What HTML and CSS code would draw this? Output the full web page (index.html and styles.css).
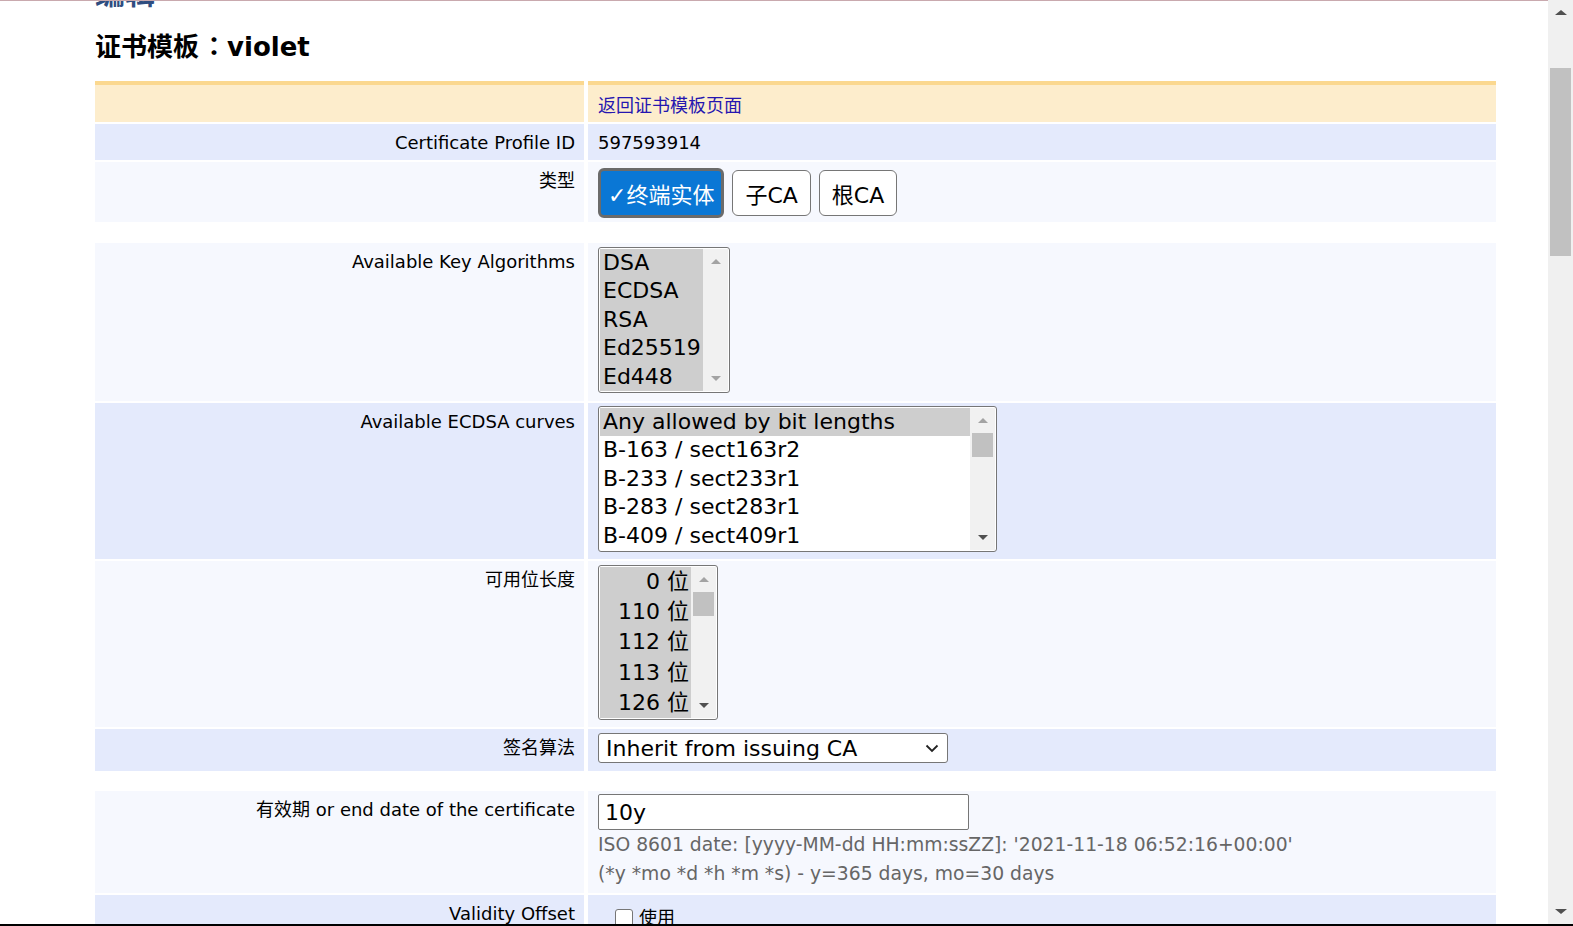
FILE: index.html
```html
<!DOCTYPE html>
<html lang="zh-CN">
<head>
<meta charset="utf-8">
<title>证书模板：violet</title>
<link rel="stylesheet" href="styles.css">
</head>
<body>
<div class="viewport">
  <div class="main">
    <h1 class="page-title">编辑</h1>
    <h2 class="profile-title">证书模板<span class="colon" lang="zh-TW">：</span>violet</h2>
    <div class="form">
      <div class="row row-head">
        <div class="cell label"></div>
        <div class="cell value"><a class="link" href="#">返回证书模板页面</a></div>
      </div>
      <div class="row row-blue row-text">
        <div class="cell label">Certificate Profile ID</div>
        <div class="cell value">597593914</div>
      </div>
      <div class="row row-light row-type">
        <div class="cell label">类型</div>
        <div class="cell value">
          <div class="btn-group">
            <button class="btn btn-active" type="button">✓终端实体</button>
            <button class="btn" type="button">子CA</button>
            <button class="btn" type="button">根CA</button>
          </div>
        </div>
      </div>
      <div class="spacer"></div>
      <div class="row row-light row-list">
        <div class="cell label">Available Key Algorithms</div>
        <div class="cell value">
          <div class="listbox lb-keys">
            <div class="lb-items">
              <div class="lb-item sel">DSA</div>
              <div class="lb-item sel">ECDSA</div>
              <div class="lb-item sel">RSA</div>
              <div class="lb-item sel">Ed25519</div>
              <div class="lb-item sel">Ed448</div>
            </div>
            <div class="lb-bar">
              <div class="lb-btn"><span class="tri-up light"></span></div>
              <div class="lb-track"></div>
              <div class="lb-btn"><span class="tri-down light"></span></div>
            </div>
          </div>
        </div>
      </div>
      <div class="row row-blue row-list row-curves">
        <div class="cell label">Available ECDSA curves</div>
        <div class="cell value">
          <div class="listbox lb-curves">
            <div class="lb-items">
              <div class="lb-item sel">Any allowed by bit lengths</div>
              <div class="lb-item">B-163 / sect163r2</div>
              <div class="lb-item">B-233 / sect233r1</div>
              <div class="lb-item">B-283 / sect283r1</div>
              <div class="lb-item">B-409 / sect409r1</div>
            </div>
            <div class="lb-bar">
              <div class="lb-btn"><span class="tri-up light"></span></div>
              <div class="lb-track"><div class="lb-thumb"></div></div>
              <div class="lb-btn"><span class="tri-down"></span></div>
            </div>
          </div>
        </div>
      </div>
      <div class="row row-light row-list row-bits">
        <div class="cell label">可用位长度</div>
        <div class="cell value">
          <div class="listbox lb-bits">
            <div class="lb-items">
              <div class="lb-item sel">0 位</div>
              <div class="lb-item sel">110 位</div>
              <div class="lb-item sel">112 位</div>
              <div class="lb-item sel">113 位</div>
              <div class="lb-item sel">126 位</div>
            </div>
            <div class="lb-bar">
              <div class="lb-btn"><span class="tri-up light"></span></div>
              <div class="lb-track"><div class="lb-thumb"></div></div>
              <div class="lb-btn"><span class="tri-down"></span></div>
            </div>
          </div>
        </div>
      </div>
      <div class="row row-blue row-sig">
        <div class="cell label">签名算法</div>
        <div class="cell value">
          <div class="select">
            <span>Inherit from issuing CA</span>
            <svg class="chev" width="14" height="9" viewBox="0 0 14 9"><polyline points="1.5,1.5 7,7 12.5,1.5" fill="none" stroke="#222" stroke-width="1.8"/></svg>
          </div>
        </div>
      </div>
      <div class="spacer spacer-short"></div>
      <div class="row row-light row-validity">
        <div class="cell label">有效期 or end date of the certificate</div>
        <div class="cell value">
          <input class="text-input" type="text" value="10y">
          <div class="help">ISO 8601 date: [yyyy-MM-dd HH:mm:ssZZ]: '2021-11-18 06:52:16+00:00'</div>
          <div class="help">(*y *mo *d *h *m *s) - y=365 days, mo=30 days</div>
        </div>
      </div>
      <div class="row row-blue row-offset">
        <div class="cell label">Validity Offset</div>
        <div class="cell value">
          <label class="check"><span class="box"></span>使用</label>
        </div>
      </div>
    </div>
  </div>
  <div class="scrollbar">
    <div class="sb-btn"><span class="sb-up"></span></div>
    <div class="sb-track"><div class="sb-thumb"></div></div>
    <div class="sb-btn"><span class="sb-down"></span></div>
  </div>
</div>
<div class="bottom-line"></div>
</body>
</html>
```
FILE: styles.css
```css
html, body {
  margin: 0;
  height: 100%;
  overflow: hidden;
  background: #fff;
}
body {
  font-family: "DejaVu Sans", "Noto Sans CJK SC", sans-serif;
  font-size: 18px;
  color: #000;
}
.viewport {
  display: flex;
  height: 924px;
}
.main {
  flex: 1;
  overflow: hidden;
  border-top: 1px solid #c9a9ae;
  padding-left: 95px;
}
.page-title {
  margin: -25px 0 0;
  font-size: 30px;
  line-height: 36px;
  font-weight: bold;
  color: #2f4d80;
}
.profile-title {
  margin: 19px 0 0;
  height: 32px;
  font-size: 26px;
  line-height: 32px;
  font-weight: bold;
}
.colon {
  font-family: "Noto Sans CJK TC", sans-serif;
  line-height: 0;
  margin-left: 2px;
}
.form {
  margin-top: 18px;
  width: 1401px;
}
.row {
  display: grid;
  grid-template-columns: 489px 908px;
  column-gap: 4px;
  margin-bottom: 2px;
}
.cell {
  box-sizing: border-box;
}
.label {
  text-align: right;
  padding: 4px 9px 0 0;
  line-height: 30px;
}
.value {
  padding: 4px 0 8px 10px;
}
.row-light .cell { background: #f6f8fe; }
.row-blue .cell { background: #e4eafc; }
.row-head .cell {
  background: #fdedcc;
  border-top: 4px solid #fbd88f;
  height: 41px;
}
.row-head .value {
  padding: 6px 0 0 10px;
  line-height: 30px;
}
.link {
  color: #2516b0;
  text-decoration: none;
}
.row-text .value {
  line-height: 30px;
  padding-bottom: 2px;
}
.spacer {
  height: 17px;
  margin-bottom: 2px;
}
.spacer-short {
  height: 16px;
}
.row-type .value {
  padding: 6px 0 4px 10px;
}
.btn-group {
  display: flex;
  align-items: center;
  gap: 8px;
}
.btn {
  font-family: "DejaVu Sans", "Noto Sans CJK SC", sans-serif;
  font-size: 22px;
  height: 46px;
  padding: 0 12px;
  background: #fff;
  color: #000;
  border: 1px solid #767676;
  border-radius: 6px;
}
.btn-active {
  height: 50px;
  padding: 0 7px;
  background: #0a77d5;
  color: #fff;
  border: 3px solid #6b6b6b;
}
.listbox {
  display: inline-flex;
  border: 1px solid #767676;
  border-radius: 3px;
  padding: 1px;
  background: #fff;
  font-size: 22px;
  vertical-align: top;
}
.lb-items {
  display: flex;
  flex-direction: column;
}
.lb-item {
  padding-left: 3px;
  line-height: 28.4px;
  white-space: nowrap;
}
.lb-item.sel { background: #cecece; }
.lb-keys .lb-items { width: 103px; }
.lb-curves .lb-items { width: 370px; }
.lb-bits .lb-items { width: 91px; }
.lb-bits .lb-item {
  line-height: 30.2px;
  text-align: right;
  padding: 0 2px 0 0;
}
.lb-bar {
  width: 25px;
  background: #f1f1f1;
  display: flex;
  flex-direction: column;
}
.lb-btn {
  height: 25px;
  display: flex;
  align-items: center;
  justify-content: center;
}
.lb-track {
  flex: 1;
  padding: 0 2px;
}
.lb-thumb {
  height: 24px;
  background: #c1c1c1;
}
.tri-up, .tri-down {
  width: 0;
  height: 0;
  border-left: 5px solid transparent;
  border-right: 5px solid transparent;
}
.tri-up { border-bottom: 5px solid #505050; }
.tri-down { border-top: 5px solid #505050; }
.tri-up.light { border-bottom-color: #a3a3a3; }
.tri-down.light { border-top-color: #a3a3a3; }
.row-curves .value { padding: 3px 0 7px 10px; }
.row-bits .value { padding: 4px 0 7px 10px; }
.select {
  box-sizing: border-box;
  width: 350px;
  height: 30px;
  border: 1px solid #767676;
  border-radius: 3px;
  background: #fff;
  display: flex;
  align-items: center;
  justify-content: space-between;
  padding: 0 8px 0 7px;
  font-size: 22px;
}
.chev { display: block; }
.row-validity .value { padding: 3px 0 5px 10px; }
.text-input {
  display: block;
  box-sizing: border-box;
  width: 371px;
  height: 36px;
  margin: 0;
  border: 1px solid #767676;
  border-radius: 2px;
  padding: 0 6px;
  font-family: "DejaVu Sans", "Noto Sans CJK SC", sans-serif;
  font-size: 22px;
  color: #000;
  background: #fff;
}
.help {
  color: #666;
  font-size: 18.75px;
  line-height: 29px;
}
.row-offset .cell { height: 40px; }
.row-offset .value { padding: 13px 0 0 27px; }
.check {
  display: flex;
  align-items: flex-start;
  gap: 6px;
  line-height: 20px;
}
.box {
  width: 16px;
  height: 16px;
  border: 1px solid #767676;
  border-radius: 3px;
  background: #fff;
  margin-top: 1px;
}
.scrollbar {
  width: 25px;
  background: #f0f0f0;
  display: flex;
  flex-direction: column;
}
.sb-btn {
  height: 25px;
  display: flex;
  align-items: center;
  justify-content: center;
}
.sb-track {
  flex: 1;
  padding: 43px 2px 0;
}
.sb-thumb {
  height: 188px;
  background: #c1c1c1;
}
.sb-up, .sb-down {
  width: 0;
  height: 0;
  border-left: 6px solid transparent;
  border-right: 6px solid transparent;
}
.sb-up { border-bottom: 5px solid #505050; }
.sb-down { border-top: 5px solid #505050; }
.bottom-line {
  height: 2px;
  background: #000;
}
```
